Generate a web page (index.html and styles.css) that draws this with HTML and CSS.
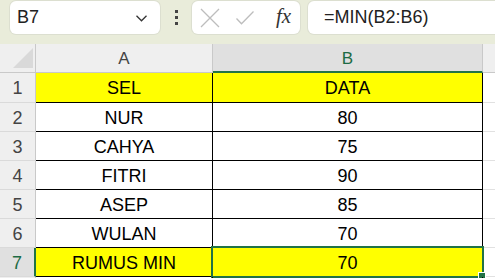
FILE: index.html
```html
<!DOCTYPE html>
<html lang="en">
<head>
    <meta charset="UTF-8">
    <meta name="viewport" content="width=device-width, initial-scale=1.0">
    <title>MIN</title>
    <link rel="stylesheet" href="styles.css">
</head>
<body>
    <div class="toolbar">
        <div class="name-box">
            <span>B7</span>
            <svg class="chevron" width="11" height="7" viewBox="0 0 11 7"><path d="M0.5 0.8 L5.5 5.8 L10.5 0.8" fill="none" stroke="#333" stroke-width="1.3"/></svg>
        </div>
        <div class="dots"><i></i><i></i><i></i></div>
        <div class="func-box">
            <svg width="20" height="20" viewBox="0 0 20 20"><path d="M1 1 L19 19 M19 1 L1 19" stroke="#bdbdbd" stroke-width="1.3"/></svg>
            <svg width="18" height="14" viewBox="0 0 18 14"><path d="M0.5 7.5 L5.5 12.8 L17.5 0.5" fill="none" stroke="#bdbdbd" stroke-width="1.3"/></svg>
            <span class="fx">fx</span>
        </div>
        <div class="formula-box">=MIN(B2:B6)</div>
    </div>

    <div class="sheet">
        <div class="corner"><div class="tri"></div></div>
        <div class="col-head">A</div>
        <div class="col-head active">B</div>
        <div class="col-head rest"></div>

        <div class="row-head">1</div>
        <div class="cell yellow">SEL</div>
        <div class="cell yellow">DATA</div>
        <div class="gap"></div>

        <div class="row-head">2</div>
        <div class="cell">NUR</div>
        <div class="cell">80</div>
        <div class="gap"></div>

        <div class="row-head">3</div>
        <div class="cell">CAHYA</div>
        <div class="cell">75</div>
        <div class="gap"></div>

        <div class="row-head">4</div>
        <div class="cell">FITRI</div>
        <div class="cell">90</div>
        <div class="gap"></div>

        <div class="row-head">5</div>
        <div class="cell">ASEP</div>
        <div class="cell">85</div>
        <div class="gap"></div>

        <div class="row-head">6</div>
        <div class="cell">WULAN</div>
        <div class="cell">70</div>
        <div class="gap"></div>

        <div class="row-head active">7</div>
        <div class="cell yellow">RUMUS MIN</div>
        <div class="cell yellow selected">70<span class="sel-frame"><span class="handle"></span></span></div>
        <div class="gap"></div>

        <div class="row-head"></div>
        <div class="cell blank"></div>
        <div class="cell blank"></div>
        <div class="gap"></div>
    </div>
</body>
</html>
```

FILE: styles.css
```css
body {
    margin: 0;
    font-family: "Liberation Sans", Arial, sans-serif;
    background-color: #ffffff;
    width: 495px;
    height: 278px;
    overflow: hidden;
}
.toolbar {
    background-color: #e9ecda;
    height: 44px;
    display: flex;
    align-items: flex-start;
    padding: 1px 0 0 10px;
    box-sizing: border-box;
}
.name-box {
    width: 150px;
    height: 33px;
    background-color: white;
    border-radius: 6px;
    box-shadow: 0 0 0 1px #dcdfd0;
    display: flex;
    align-items: center;
    justify-content: space-between;
    padding: 0 13px 0 7px;
    box-sizing: border-box;
    font-size: 18px;
    color: #222;
}
.chevron {
    margin-top: 1px;
}
.dots {
    width: 32px;
    display: flex;
    flex-direction: column;
    align-items: center;
    gap: 3px;
    padding-top: 9px;
}
.dots i {
    display: block;
    width: 3px;
    height: 3px;
    background-color: #444;
}
.func-box {
    width: 108px;
    height: 33px;
    background-color: white;
    border-radius: 6px;
    box-shadow: 0 0 0 1px #dcdfd0;
    display: flex;
    align-items: center;
    gap: 16px;
    padding-left: 8px;
    box-sizing: border-box;
}
.fx {
    font-family: "Liberation Serif", "Times New Roman", serif;
    font-style: italic;
    font-size: 21px;
    color: #333;
    margin-left: 6px;
    margin-top: -2px;
}
.formula-box {
    flex: 1;
    margin-left: 8px;
    height: 33px;
    background-color: white;
    border-radius: 6px 0 0 6px;
    box-shadow: 0 0 0 1px #dcdfd0;
    display: flex;
    align-items: center;
    padding-left: 16px;
    font-size: 18px;
    color: #222;
}
.sheet {
    display: grid;
    grid-template-columns: 36px 177px 270px 1fr;
    grid-template-rows: 29px 30px repeat(6, 29px) 1fr;
}
.corner {
    background-color: #efefef;
    border-right: 1px solid #c9c9c9;
    border-bottom: 1px solid #c9c9c9;
    position: relative;
}
.tri {
    position: absolute;
    left: 13px;
    top: 4px;
    width: 20px;
    height: 20px;
    background-color: #d9d9d9;
    clip-path: polygon(100% 0, 100% 100%, 0 100%);
}
.col-head {
    background-color: #efefef;
    border-right: 1px solid #c9c9c9;
    border-bottom: 1px solid #c9c9c9;
    display: flex;
    align-items: center;
    justify-content: center;
    font-size: 17px;
    color: #444;
    padding-top: 2px;
    box-sizing: border-box;
}
.col-head.active {
    background-color: #e0e0e0;
    color: #1d6b44;
    border-bottom: 2px solid #217346;
}
.col-head.rest {
    border-right: none;
}
.row-head {
    background-color: #efefef;
    border-right: 1px solid #c9c9c9;
    border-bottom: 1px solid #dadada;
    display: flex;
    align-items: center;
    justify-content: center;
    font-size: 18px;
    color: #444;
    padding-top: 2px;
    box-sizing: border-box;
}
.row-head.active {
    background-color: #e0e0e0;
    color: #1d6b44;
    border-right: 2px solid #217346;
}
.cell {
    border-right: 1px solid #000;
    border-bottom: 1px solid #000;
    display: flex;
    align-items: center;
    justify-content: center;
    font-size: 18px;
    color: #000;
    padding-top: 2px;
    box-sizing: border-box;
    position: relative;
}
.cell.yellow {
    background-color: #ffff00;
}
.cell.blank {
    border-bottom: none;
}
.gap {
    border-bottom: 1px solid #e1e1e1;
}
.sel-frame {
    position: absolute;
    left: -2px;
    top: -2px;
    right: -2px;
    bottom: -2px;
    border: 2px solid #217346;
}
.handle {
    position: absolute;
    right: -4px;
    bottom: -4px;
    width: 6px;
    height: 6px;
    background-color: #217346;
    border: 1px solid white;
}
```
